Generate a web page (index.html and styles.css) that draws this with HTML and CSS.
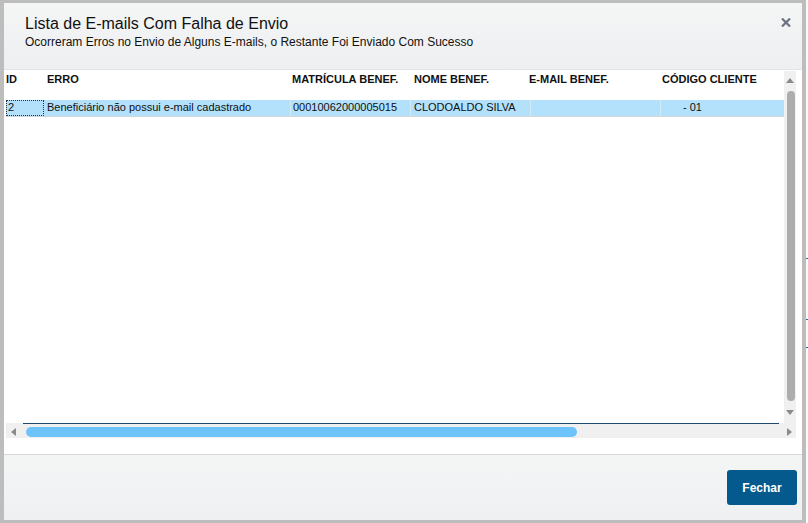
FILE: index.html
```html
<!DOCTYPE html>
<html lang="pt-BR">
<head>
  <meta charset="UTF-8">
  <title>Lista de E-mails Com Falha de Envio</title>
  <link rel="stylesheet" href="styles.css">
</head>
<body>
  <div class="page">
    <div class="modal">
      <div class="modal-header">
        <div class="modal-titles">
          <div class="modal-title">Lista de E-mails Com Falha de Envio</div>
          <div class="modal-subtitle">Ocorreram Erros no Envio de Alguns E-mails, o Restante Foi Enviado Com Sucesso</div>
        </div>
        <button type="button" class="modal-close" aria-label="Fechar">
          <svg width="10" height="9" viewBox="0 0 10 9"><path d="M1 0.5 L9 8.5 M9 0.5 L1 8.5" stroke="#6b7181" stroke-width="2.2" fill="none"/></svg>
        </button>
      </div>

      <div class="modal-body">
        <div class="grid">
          <div class="grid-main">
            <div class="grid-content">
              <div class="grid-head">
                <div class="h-id">ID</div>
                <div class="h-erro">ERRO</div>
                <div class="h-mat">MATRÍCULA BENEF.</div>
                <div class="h-nome">NOME BENEF.</div>
                <div class="h-email">E-MAIL BENEF.</div>
                <div class="h-cod">CÓDIGO CLIENTE</div>
              </div>
              <div class="grid-row selected">
                <div class="c-id focus">2</div>
                <div class="c-erro">Beneficiário não possui e-mail cadastrado</div>
                <div class="c-mat">00010062000005015</div>
                <div class="c-nome">CLODOALDO SILVA</div>
                <div class="c-email"></div>
                <div class="c-cod">- 01</div>
              </div>
            </div>
            <div class="vscroll">
              <div class="arrow arrow-up"></div>
              <div class="vthumb"></div>
              <div class="arrow arrow-down"></div>
            </div>
          </div>
          <div class="hscroll">
            <div class="arrow arrow-left"></div>
            <div class="hthumb-track"><div class="hthumb"></div></div>
            <div class="arrow arrow-right"></div>
          </div>
        </div>
      </div>

      <div class="modal-footer">
        <button type="button" class="btn-primary">Fechar</button>
      </div>
    </div>
    <div class="backdrop-edge">
      <span class="mark m1"></span>
      <span class="mark m2"></span>
      <span class="mark m3"></span>
    </div>
  </div>
</body>
</html>
```

FILE: styles.css
```css
/* base */
body {
  margin: 0;
  padding: 0;
  background-color: #fafafa;
  font-family: "Liberation Sans", Arial, sans-serif;
  color: #111;
}
.page {
  display: flex;
  width: 808px;
  height: 523px;
}

/* janela */
.modal {
  width: 798px;
  height: 517px;
  border-style: solid;
  border-color: #bdbdbd;
  border-width: 3px 4px 3px 4px;
  display: flex;
  flex-direction: column;
  background-color: #fff;
}
.modal-header {
  height: 67px;
  border-bottom: 1px solid #e2e3e5;
  background: linear-gradient(#f4f5f5, #eeeff1);
  display: flex;
  justify-content: space-between;
  align-items: flex-start;
  box-sizing: border-box;
  padding: 11px 11px 0 21px;
}
.modal-title {
  font-size: 16px;
  line-height: 20px;
  color: #111;
}
.modal-subtitle {
  margin-top: 1px;
  font-size: 12px;
  line-height: 14px;
  color: #111;
}
.modal-close {
  margin-top: 4px;
  padding: 0;
  border: none;
  background: none;
  width: 10px;
  height: 9px;
  display: block;
}
.modal-close svg {
  display: block;
}

/* corpo / grid */
.modal-body {
  flex: 1;
  padding: 0 6px 0 2px;
}
.grid {
  display: flex;
  flex-direction: column;
  height: 368px;
}
.grid-main {
  flex: 1;
  display: flex;
}
.grid-content {
  flex: 1;
  font-size: 11px;
  line-height: 13px;
}
.grid-head {
  display: flex;
  height: 27px;
  padding-top: 3px;
  font-weight: bold;
  color: #111;
}
.h-id { width: 41px; }
.h-erro { width: 245px; }
.h-mat { width: 122px; }
.h-nome { width: 115px; }
.h-email { width: 133px; }
.h-cod { flex: 1; }

.grid-row {
  display: flex;
  height: 17px;
  box-sizing: border-box;
  border-bottom: 1px solid #cfd6da;
}
.grid-row.selected {
  background-color: #b3e0fa;
}
.grid-row > div {
  box-sizing: border-box;
  padding-top: 1px;
  border-right: 1px solid #d2e9f6;
  white-space: nowrap;
}
.grid-row > div:last-child {
  border-right: none;
}
.c-id { width: 38px; padding-left: 2px; }
.c-erro { width: 247px; padding-left: 3px; }
.c-mat { width: 120px; padding-left: 2px; }
.c-nome { width: 120px; padding-left: 3px; }
.c-email { width: 130px; }
.c-cod { flex: 1; padding-left: 22px; }
.grid-row > .focus {
  border: 1px dotted #333;
  padding: 0 0 0 1px;
}

/* barras de rolagem */
.vscroll {
  width: 12px;
  margin-top: 1px;
  background-color: #f0f0f0;
  display: flex;
  flex-direction: column;
  align-items: flex-end;
}
.vthumb {
  width: 8px;
  flex: 1;
  margin: 8px 1px 9px 0;
  background-color: #adadad;
  border-radius: 4px;
}
.hscroll {
  height: 15px;
  box-sizing: border-box;
  background-color: #f0f0f0;
  display: flex;
  align-items: center;
  position: relative;
}
.hscroll::before {
  content: "";
  position: absolute;
  top: 0;
  left: 17px;
  width: 756px;
  height: 1px;
  background-color: #1d4a72;
}
.hthumb-track {
  flex: 1;
  height: 10px;
  margin-top: 3px;
}
.hthumb {
  width: 551px;
  height: 10px;
  margin-left: 10px;
  background-color: #6cc4fa;
  border-radius: 5px;
}

.arrow {
  width: 0;
  height: 0;
  border-style: solid;
  border-color: transparent;
}
.arrow-up {
  margin: 7px 2px 0 0;
  border-width: 0 4px 5px 4px;
  border-bottom-color: #8a8a8a;
}
.arrow-down {
  margin: 0 2px 8px 0;
  border-width: 5px 4px 0 4px;
  border-top-color: #8a8a8a;
}
.arrow-left {
  margin: 3px 0 0 5px;
  border-width: 4px 5px 4px 0;
  border-right-color: #8a8a8a;
}
.arrow-right {
  margin: 3px 4px 0 0;
  border-width: 4px 0 4px 5px;
  border-left-color: #8a8a8a;
}

/* rodapé */
.modal-footer {
  height: 66px;
  box-sizing: border-box;
  border-top: 1px solid #d6d7d8;
  background: linear-gradient(#f4f5f5, #eef0f2);
  display: flex;
  justify-content: flex-end;
  align-items: flex-start;
  padding: 15px 5px 0 0;
}
.btn-primary {
  width: 70px;
  height: 35px;
  border: none;
  border-radius: 3px;
  background-color: #045a8d;
  color: #fff;
  font-family: "Liberation Sans", Arial, sans-serif;
  font-size: 12px;
  font-weight: bold;
  cursor: pointer;
}

/* resto da tela atrás */
.backdrop-edge {
  flex: 1;
  display: flex;
  flex-direction: column;
}
.mark {
  display: block;
  width: 2px;
  height: 1px;
  background-color: #2a6aa0;
}
.m1 { margin-top: 258px; }
.m2 { margin-top: 60px; }
.m3 { margin-top: 27px; }
```
